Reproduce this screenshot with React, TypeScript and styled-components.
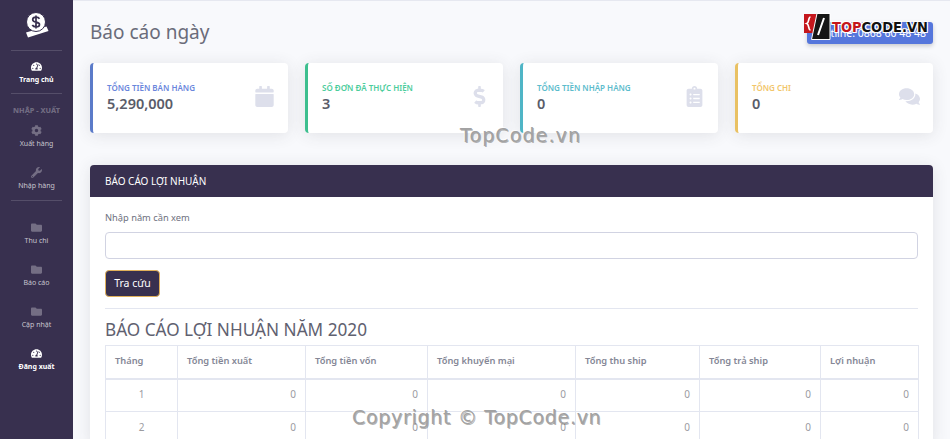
import React from 'react';
import styled, { createGlobalStyle } from 'styled-components';
import {
    FaCalendar, FaClipboardList, FaCog, FaComments, FaDollarSign, FaFolder, FaTachometerAlt, FaWrench,
} from 'react-icons/fa';

const GlobalStyle = createGlobalStyle`
  html, body {
    margin: 0;
    height: 439px;
    overflow: hidden;
    background: #f8f9fc;
  }
  * { box-sizing: border-box; }
  body {
    font-family: "Noto Sans", "Open Sans", sans-serif;
    color: #858796;
  }
`;

const Page = styled.div`
  position: relative;
  display: flex;
  width: 950px;
  height: 439px;
  overflow: hidden;
`;

const Sidebar = styled.nav`
  flex: 0 0 73px;
  background: #38304f;
  display: flex;
  flex-direction: column;
  align-items: center;
  padding-top: 12px;
`;

const Brand = styled.div`
  height: 38px;
`;

const Divider = styled.hr<{ $top: number; $bottom: number }>`
  width: 51px;
  margin: ${(props) => `${props.$top}px 0 ${props.$bottom}px`};
  border: 0;
  border-top: 1px solid rgba(255, 255, 255, 0.15);
`;

const SectionTitle = styled.div`
  font-size: 7.3px;
  font-weight: 800;
  line-height: 10px;
  white-space: nowrap;
  color: rgba(255, 255, 255, 0.3);
  margin-bottom: 10px;
`;

const NavGroup = styled.div`
  display: flex;
  flex-direction: column;
  gap: 18px;
`;

const NavItem = styled.a<{ $active?: boolean }>`
  display: flex;
  flex-direction: column;
  align-items: center;
  height: 24px;
  font-size: 7px;
  line-height: 11px;
  font-weight: ${(props) => (props.$active ? 700 : 400)};
  white-space: nowrap;
  color: ${(props) => (props.$active ? '#fff' : 'rgba(255, 255, 255, 0.72)')};
  svg {
    width: 11px;
    height: 11px;
    margin-bottom: 2px;
    color: ${(props) => (props.$active ? '#fff' : 'rgba(255, 255, 255, 0.3)')};
  }
`;

const Main = styled.main`
  flex: 1;
  min-width: 0;
  padding: 21px 17px 0;
  border-top: 1px solid #e6e8f0;
`;

const TopRow = styled.div`
  display: flex;
  justify-content: space-between;
  align-items: flex-start;
  height: 41px;
`;

const PageTitle = styled.h1`
  margin: 0;
  font-size: 19px;
  font-weight: 400;
  line-height: 21px;
  color: #6a6c7a;
`;

const HotlineButton = styled.a`
  width: 126px;
  height: 22px;
  padding-right: 7px;
  border-radius: 3px;
  background: #5576dc;
  box-shadow: 0 2px 4px rgba(58, 59, 69, 0.25);
  color: #fff;
  font-size: 10.5px;
  line-height: 22px;
  text-align: right;
  white-space: nowrap;
`;

const StatGrid = styled.section`
  display: grid;
  grid-template-columns: repeat(4, 198px);
  justify-content: space-between;
`;

const StatCard = styled.article<{ $color: string }>`
  display: flex;
  align-items: center;
  justify-content: space-between;
  height: 70px;
  padding: 0 13px 0 14px;
  background: #fff;
  border-left: 3px solid ${(props) => props.$color};
  border-radius: 4px;
  box-shadow: 0 2px 16px rgba(58, 59, 69, 0.12);
  svg {
    width: auto;
    height: 21px;
    margin-bottom: 4px;
    color: #dddfeb;
  }
`;

const StatLabel = styled.div<{ $color: string }>`
  font-size: 8px;
  font-weight: 600;
  line-height: 11px;
  color: ${(props) => props.$color};
`;

const StatValue = styled.div`
  margin-top: 1px;
  font-size: 14.5px;
  font-weight: 600;
  line-height: 18px;
  color: #5a5c69;
`;

const StatText = styled.div`
  margin-bottom: 3px;
`;

const Panel = styled.section`
  margin-top: 32px;
  background: #fff;
  border-radius: 4px;
  box-shadow: 0 2px 16px rgba(58, 59, 69, 0.12);
`;

const PanelHeader = styled.header`
  height: 32px;
  padding-left: 15px;
  background: #38304f;
  border-radius: 4px 4px 0 0;
  color: #fff;
  font-size: 10px;
  line-height: 32px;
`;

const PanelBody = styled.div`
  padding: 14px 15px 0;
`;

const FieldLabel = styled.label`
  display: block;
  font-size: 9.3px;
  line-height: 14px;
  color: #6e707e;
`;

const FieldInput = styled.input`
  display: block;
  width: 100%;
  height: 27px;
  margin-top: 7px;
  background: #fff;
  border: 1px solid #d1d3e2;
  border-radius: 4px;
`;

const SearchButton = styled.button`
  display: block;
  width: 55px;
  height: 27px;
  margin-top: 11px;
  padding: 0;
  background: #38304f;
  border: 1px solid #e0b05a;
  border-radius: 4px;
  color: #fff;
  font: 400 10.5px/25px "Noto Sans", sans-serif;
`;

const Rule = styled.hr`
  margin: 11px 0 0;
  border: 0;
  border-top: 1px solid #e3e6f0;
`;

const ReportTitle = styled.h4`
  margin: 10px 0 5px;
  font-size: 17.2px;
  font-weight: 400;
  line-height: 21px;
  color: #5f6170;
`;

const ReportTable = styled.table`
  width: 813px;
  table-layout: fixed;
  border-collapse: collapse;
  font-size: 9.3px;
  th, td {
    border: 1px solid #e3e6f0;
    padding: 0 9px 2px;
  }
  th {
    height: 33px;
    border-bottom-width: 2px;
    text-align: left;
    font-weight: 600;
    color: #858796;
  }
  td {
    height: 33px;
    text-align: right;
    font-size: 10px;
    color: #9b9b9f;
  }
  td:first-child {
    text-align: center;
    padding: 0 0 2px;
  }
`;

const TopCodeLogo = styled.div`
  position: absolute;
  top: 12px;
  left: 803px;
  display: flex;
  align-items: center;
  gap: 1px;
`;

const LogoText = styled.span`
  font: 700 14.5px/20px "DejaVu Sans Condensed", "DejaVu Sans", sans-serif;
  font-stretch: condensed;
  color: #111;
  margin-top: 2px;
  text-shadow: 1px 1px 0 #fff, -1px -1px 0 #fff, 1px -1px 0 #fff, -1px 1px 0 #fff;
  em {
    font-style: normal;
    color: #c4161c;
  }
`;

const Watermark = styled.div<{ $top: number; $left: number; $spacing: number }>`
  position: absolute;
  top: ${(props) => props.$top}px;
  left: ${(props) => props.$left}px;
  font: 400 19px/1 "DejaVu Sans", sans-serif;
  letter-spacing: ${(props) => props.$spacing}px;
  white-space: nowrap;
  color: #a2a2a2;
  text-shadow: 1px 1px 0 rgba(90, 90, 90, 0.45), -1px -1px 0 rgba(255, 255, 255, 0.8);
`;

const stats = [
    { label: 'TỔNG TIỀN BÁN HÀNG', value: '5,290,000', color: '#6a86dc', edge: '#5b7bc9', icon: <FaCalendar /> },
    { label: 'SỐ ĐƠN ĐÃ THỰC HIỆN', value: '3', color: '#4ccd9c', edge: '#3dbf8f', icon: <FaDollarSign /> },
    { label: 'TỔNG TIỀN NHẬP HÀNG', value: '0', color: '#5cbccc', edge: '#4fb5c6', icon: <FaClipboardList /> },
    { label: 'TỔNG CHI', value: '0', color: '#f2c66a', edge: '#e9c163', icon: <FaComments /> },
];

const columns = [
    { title: 'Tháng', width: 72 },
    { title: 'Tổng tiền xuất', width: 128 },
    { title: 'Tổng tiền vốn', width: 122 },
    { title: 'Tổng khuyến mại', width: 148 },
    { title: 'Tổng thu ship', width: 124 },
    { title: 'Tổng trả ship', width: 121 },
    { title: 'Lợi nhuận', width: 98 },
];

function BrandIcon() {
    return (
        <svg width="24" height="26" viewBox="0 0 24 26" aria-hidden="true">
            <path d="M1 20.500 21.500 14.500 23.500 19 3 25.500Z" fill="#fff" />
            <circle cx="11" cy="10" r="9.500" fill="#fff" stroke="#38304f" strokeWidth="1" />
            <path d="M14.500 6.800C13.800 5.700 12.500 5.200 11 5.200 9 5.200 7.700 6.200 7.700 7.700 7.700 11 14.500 9.200 14.500 12.400 14.500 13.900 13 14.800 11 14.800 9.400 14.800 8 14.200 7.300 13M11 3.500V16.500" stroke="#38304f" strokeWidth="1.700" fill="none" />
        </svg>
    );
}

function CodeIcon() {
    return (
        <svg width="28" height="28" viewBox="0 0 28 28" aria-hidden="true">
            <path d="M1 2h15l-5 19H1Z" fill="#c4161c" />
            <path d="M7.500 5C5 5 6.500 10.500 3.800 11.500 6.500 12.500 5 18 7.500 18" stroke="#fff" strokeWidth="1.700" fill="none" />
            <path d="M14 1.500h13v26H8.500Z" fill="#161616" stroke="#fff" strokeWidth="1" />
            <path d="M21 6 15 23" stroke="#fff" strokeWidth="2" />
        </svg>
    );
}

export default function App() {
    return (
        <Page>
            <GlobalStyle />
            <Sidebar>
                <Brand><BrandIcon /></Brand>
                <Divider $top={0} $bottom={10} />
                <NavItem $active><FaTachometerAlt />Trang chủ</NavItem>
                <Divider $top={8} $bottom={11} />
                <SectionTitle>NHẬP - XUẤT</SectionTitle>
                <NavGroup>
                    <NavItem><FaCog />Xuất hàng</NavItem>
                    <NavItem><FaWrench />Nhập hàng</NavItem>
                </NavGroup>
                <Divider $top={9} $bottom={21} />
                <NavGroup>
                    <NavItem><FaFolder />Thu chi</NavItem>
                    <NavItem><FaFolder />Báo cáo</NavItem>
                    <NavItem><FaFolder />Cập nhật</NavItem>
                    <NavItem $active><FaTachometerAlt />Đăng xuất</NavItem>
                </NavGroup>
            </Sidebar>
            <Main>
                <TopRow>
                    <PageTitle>Báo cáo ngày</PageTitle>
                    <HotlineButton>Hotline: 0868 60 48 48</HotlineButton>
                </TopRow>
                <StatGrid>
                    {stats.map((stat) => (
                        <StatCard key={stat.label} $color={stat.edge}>
                            <StatText>
                                <StatLabel $color={stat.color}>{stat.label}</StatLabel>
                                <StatValue>{stat.value}</StatValue>
                            </StatText>
                            {stat.icon}
                        </StatCard>
                    ))}
                </StatGrid>
                <Panel>
                    <PanelHeader>BÁO CÁO LỢI NHUẬN</PanelHeader>
                    <PanelBody>
                        <FieldLabel htmlFor="year">Nhập năm cần xem</FieldLabel>
                        <FieldInput id="year" type="text" />
                        <SearchButton type="button">Tra cứu</SearchButton>
                        <Rule />
                        <ReportTitle>BÁO CÁO LỢI NHUẬN NĂM 2020</ReportTitle>
                        <ReportTable>
                            <colgroup>
                                {columns.map((col) => <col key={col.title} width={col.width} />)}
                            </colgroup>
                            <thead>
                                <tr>{columns.map((col) => <th key={col.title}>{col.title}</th>)}</tr>
                            </thead>
                            <tbody>
                                {[1, 2].map((month) => (
                                    <tr key={month}>
                                        <td>{month}</td>
                                        {columns.slice(1).map((col) => <td key={col.title}>0</td>)}
                                    </tr>
                                ))}
                            </tbody>
                        </ReportTable>
                    </PanelBody>
                </Panel>
            </Main>
            <TopCodeLogo>
                <CodeIcon />
                <LogoText><em>TOP</em>CODE.VN</LogoText>
            </TopCodeLogo>
            <Watermark $top={126} $left={460} $spacing={1.1}>TopCode.vn</Watermark>
            <Watermark $top={408} $left={352} $spacing={0.7}>Copyright © TopCode.vn</Watermark>
        </Page>
    );
}
